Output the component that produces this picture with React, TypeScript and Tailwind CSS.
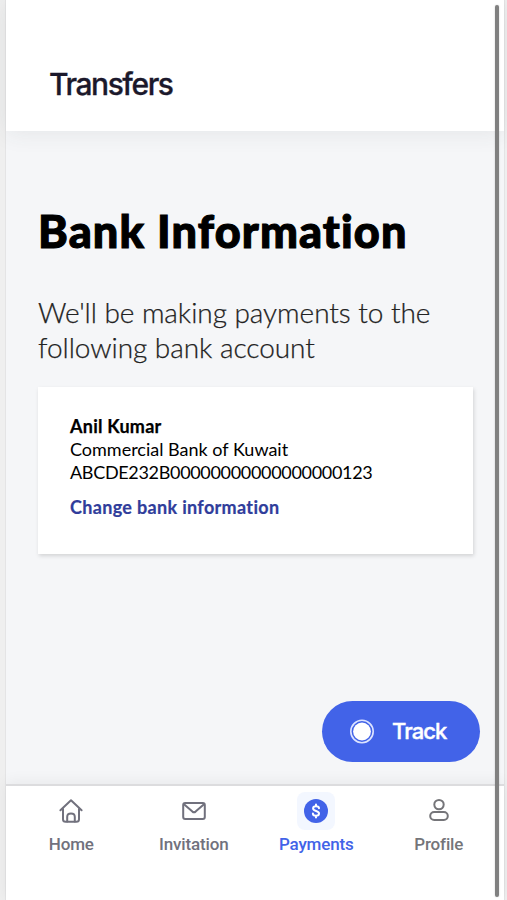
import React from "react";

const HomeIcon = () => (
  <svg width="26" height="28" viewBox="0 0 26 28" fill="none" stroke="#71717d" strokeWidth="2" strokeLinecap="round" strokeLinejoin="round">
    <path d="M2.4 13.2 13 3.2l10.6 10" />
    <path d="M5 12v10.2c0 1.7.9 2.6 2.6 2.6h10.8c1.7 0 2.6-.9 2.6-2.6V12" />
    <path d="M9.2 24.5v-4.6c0-2.2 1.3-3.4 3.8-3.4s3.8 1.2 3.8 3.4v4.6" />
  </svg>
);

const MailIcon = () => (
  <svg width="26" height="28" viewBox="0 0 26 28" fill="none" stroke="#71717d" strokeWidth="2" strokeLinecap="round" strokeLinejoin="round">
    <rect x="2.2" y="6.1" width="21.6" height="15.8" rx="2" />
    <path d="m3 7.2 8.4 7.4c1 .8 2.2.8 3.2 0L23 7.2" />
  </svg>
);

const DollarIcon = () => (
  <svg width="38" height="38" viewBox="0 0 38 38" fill="none">
    <circle cx="19" cy="19" r="12" fill="#4263e8" />
    <path d="M22 16.3c0-1.4-1.2-2.1-3-2.1s-2.9.8-2.9 2.2c0 3.2 5.9 1.9 5.9 5 0 1.5-1.2 2.3-3 2.3s-3.1-.8-3.1-2.3M19 12.6v1.5m0 9.8v1.5" stroke="#fff" strokeWidth="2" strokeLinecap="round" />
  </svg>
);

const ProfileIcon = () => (
  <svg width="26" height="28" viewBox="0 0 26 28" fill="none" stroke="#757579" strokeWidth="2">
    <circle cx="13" cy="7.6" r="4.7" />
    <rect x="4.2" y="15" width="17.6" height="8" rx="4" />
  </svg>
);

const items = [
  { label: "Home", icon: <HomeIcon />, tone: "text-[#71717d]" },
  { label: "Invitation", icon: <MailIcon />, tone: "text-[#71717d]" },
  { label: "Payments", icon: <DollarIcon />, tone: "text-[#4263e8]", active: true },
  { label: "Profile", icon: <ProfileIcon />, tone: "text-[#757579]" },
];

export default function App() {
  return (
    <div className="relative h-[900px] w-[507px] overflow-hidden bg-[#efefef] pl-[5px] pr-[2px]">
      <div className="flex h-full flex-col border-x border-[#e4e4e5] bg-[#f5f6f8]">
        <header className="z-10 flex h-[131px] shrink-0 items-end bg-white pb-[28px] pl-[43px] shadow-[0_2px_22px_rgba(50,65,70,0.09)]">
          <h1 className="whitespace-nowrap font-['Inter',sans-serif] text-[30px] font-medium leading-[38px] tracking-[-1.45px] text-[#1b182b] [-webkit-text-stroke:0.3px_#1b182b]">Transfers</h1>
        </header>

        <main className="flex h-[653px] shrink-0 flex-col px-8 font-['Lato',sans-serif] text-black [font-variant-ligatures:none]">
          <h2 className="mt-[73px] whitespace-nowrap text-[45px] font-black leading-[54px] tracking-[1.15px] [-webkit-text-stroke:1.1px_black]">Bank Information</h2>
          <p className="mt-[37px] whitespace-nowrap text-[28px] font-light leading-[35px] tracking-[-0.05px] text-[#222222] [-webkit-text-stroke:0.25px_#222222]">
            <span className="block">We'll be making payments to the</span>
            <span className="block">following bank account</span>
          </p>
          <section className="mt-[22px] h-[167px] w-[435px] whitespace-nowrap bg-white px-8 pt-[28px] text-[18px] leading-[23px] shadow-[1px_2px_4px_rgba(0,0,0,0.14)]">
            <p className="font-bold tracking-[0.25px] [-webkit-text-stroke:0.25px_black]">Anil Kumar</p>
            <p>Commercial Bank of Kuwait</p>
            <p className="tracking-[-0.32px]">ABCDE232B00000000000000000123</p>
            <a className="mt-[12px] block font-bold tracking-[0.33px] text-[#303d9b] [-webkit-text-stroke:0.2px_#303d9b]">Change bank information</a>
          </section>
          <button className="mr-[-8px] mt-[147px] flex h-[61px] w-[158px] items-center self-end rounded-full bg-[#4263e8] pl-[28px] font-['Inter',sans-serif] text-[22px] font-medium tracking-[-0.95px] text-white">
            <svg width="24" height="26" viewBox="0 0 24 26" fill="none">
              <circle cx="12" cy="12.5" r="11.2" stroke="#dce3ff" strokeWidth="1.6" />
              <circle cx="12" cy="12.5" r="8.9" fill="#fff" />
            </svg>
            <span className="ml-[18px] [-webkit-text-stroke:0.4px_white]">Track</span>
          </button>
        </main>

        <nav className="z-10 flex h-[116px] shrink-0 border-t-2 border-[#dcdcde] bg-white pt-[6px] pl-[4px] shadow-[0_-2px_14px_rgba(0,0,0,0.06)]">
          {items.map((item) => (
            <div key={item.label} className={`flex w-[122.5px] shrink-0 flex-col items-center ${item.tone}`}>
              <span className={`flex size-[38px] items-center justify-center rounded-lg ${item.active ? "bg-[#f3f7ff]" : ""}`}>{item.icon}</span>
              <span className="mt-[4px] font-['Roboto',sans-serif] text-[17px] font-medium leading-[20px] tracking-[-0.15px]">{item.label}</span>
            </div>
          ))}
        </nav>
      </div>
      <div className="absolute left-[495px] top-[5px] z-20 h-[892px] w-[4px] rounded-full bg-[#808080] shadow-[0_0_2px_rgba(0,0,0,0.2)]" />
    </div>
  );
}
